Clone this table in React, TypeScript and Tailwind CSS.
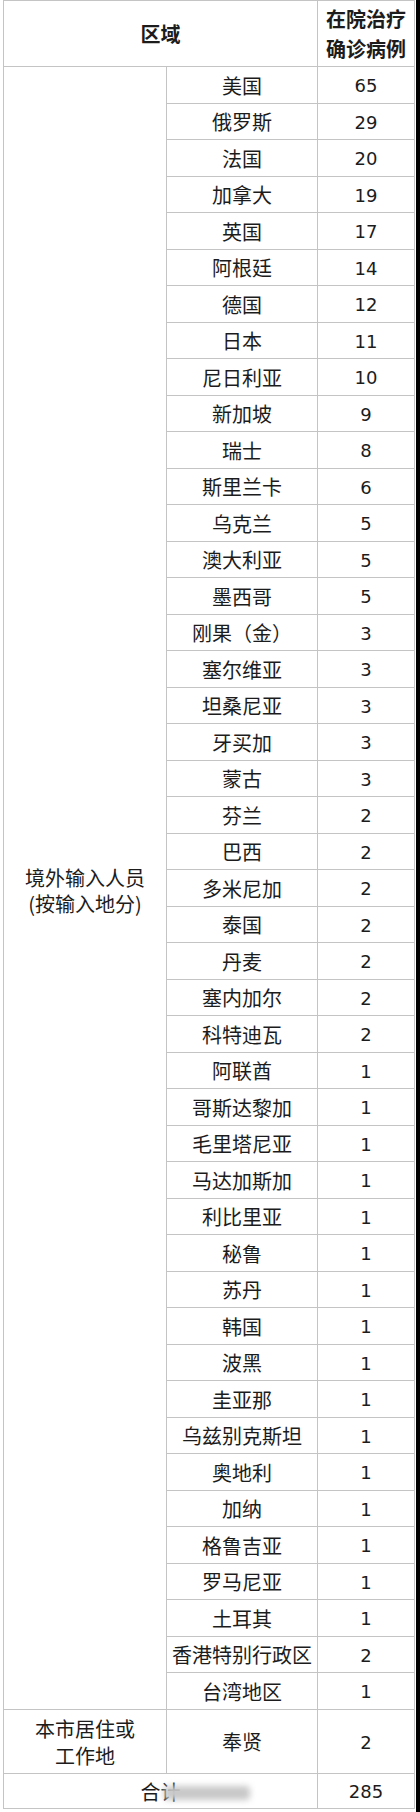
import React from 'react';

const rows: [string, number][] = [
  ['美国', 65],
  ['俄罗斯', 29],
  ['法国', 20],
  ['加拿大', 19],
  ['英国', 17],
  ['阿根廷', 14],
  ['德国', 12],
  ['日本', 11],
  ['尼日利亚', 10],
  ['新加坡', 9],
  ['瑞士', 8],
  ['斯里兰卡', 6],
  ['乌克兰', 5],
  ['澳大利亚', 5],
  ['墨西哥', 5],
  ['刚果（金）', 3],
  ['塞尔维亚', 3],
  ['坦桑尼亚', 3],
  ['牙买加', 3],
  ['蒙古', 3],
  ['芬兰', 2],
  ['巴西', 2],
  ['多米尼加', 2],
  ['泰国', 2],
  ['丹麦', 2],
  ['塞内加尔', 2],
  ['科特迪瓦', 2],
  ['阿联酋', 1],
  ['哥斯达黎加', 1],
  ['毛里塔尼亚', 1],
  ['马达加斯加', 1],
  ['利比里亚', 1],
  ['秘鲁', 1],
  ['苏丹', 1],
  ['韩国', 1],
  ['波黑', 1],
  ['圭亚那', 1],
  ['乌兹别克斯坦', 1],
  ['奥地利', 1],
  ['加纳', 1],
  ['格鲁吉亚', 1],
  ['罗马尼亚', 1],
  ['土耳其', 1],
  ['香港特别行政区', 2],
  ['台湾地区', 1],
];

const cjk = "font-['Noto_Sans_CJK_SC',sans-serif]";
const num = "font-['DejaVu_Sans',sans-serif]";

const Row = ({ name, count }: { name: string; count: number }) => (
  <div className="flex h-[36.5px] border-b border-[#c4c4c4]">
    <div className={`w-[151px] flex items-center justify-center border-r border-[#c4c4c4] text-[20px] pt-[2px] ${cjk}`}>
      {name}
    </div>
    <div className={`w-[97px] flex items-center justify-center border-r border-[#c4c4c4] text-[18px] pt-[2px] ${num}`}>
      {count}
    </div>
  </div>
);

export default function App() {
  return (
    <div className="flex w-[420px] min-h-[1812px] bg-white text-[#1c1c1c]">
      <div className="w-[416px] bg-white">
        <div className="ml-[3px] w-[412px] border-l border-t border-[#c4c4c4]">
          {/* header */}
          <div className="flex h-[66px] border-b border-[#c4c4c4]">
            <div className={`w-[314px] flex items-center justify-center border-r border-[#c4c4c4] text-[20px] font-bold ${cjk}`}>
              区域
            </div>
            <div className={`w-[97px] flex flex-col items-center justify-center border-r border-[#c4c4c4] text-[20px] font-bold leading-[30px] ${cjk}`}>
              <span>在院治疗</span>
              <span>确诊病例</span>
            </div>
          </div>

          {/* imported cases */}
          <div className="flex border-b border-[#c4c4c4]">
            <div className={`w-[163px] flex flex-col items-center justify-center border-r border-[#c4c4c4] text-[20px] leading-[26px] pt-[6px] ${cjk}`}>
              <span>境外输入人员</span>
              <span>(按输入地分)</span>
            </div>
            <div className="flex flex-col -mb-px">
              {rows.map(([name, count]) => (
                <Row key={name} name={name} count={count} />
              ))}
            </div>
          </div>

          {/* local */}
          <div className="flex h-[64px] border-b border-[#c4c4c4]">
            <div className={`w-[163px] flex flex-col items-center justify-center border-r border-[#c4c4c4] text-[20px] leading-[27px] pt-[2px] ${cjk}`}>
              <span>本市居住或</span>
              <span>工作地</span>
            </div>
            <div className={`w-[151px] flex items-center justify-center border-r border-[#c4c4c4] text-[20px] pt-[2px] ${cjk}`}>
              奉贤
            </div>
            <div className={`w-[97px] flex items-center justify-center border-r border-[#c4c4c4] text-[18px] pt-[2px] ${num}`}>
              2
            </div>
          </div>

          {/* total */}
          <div className="flex h-[35px] border-b border-[#c4c4c4]">
            <div className={`relative w-[314px] flex items-center justify-center border-r border-[#c4c4c4] text-[20px] pt-[2px] ${cjk}`}>
              合计
              <div className="absolute left-[160px] top-[12px] w-[86px] h-[14px] bg-[#c8c8c8] blur-[3px] rounded" />
            </div>
            <div className={`w-[97px] flex items-center justify-center border-r border-[#c4c4c4] text-[18px] pt-[2px] ${num}`}>
              285
            </div>
          </div>
        </div>
      </div>
      <div className="w-[4px] bg-black" />
    </div>
  );
}
